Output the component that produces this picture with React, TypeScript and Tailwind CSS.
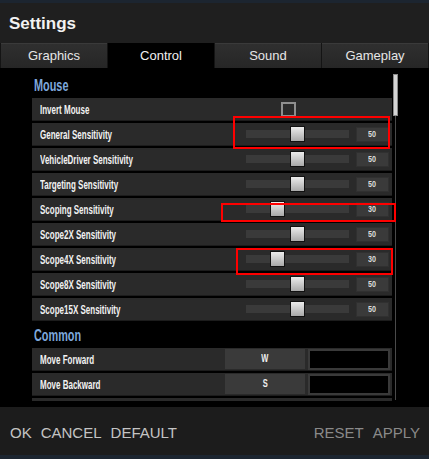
import React from "react";

type Row = { label: string; kind: "check" | "slider"; v?: number };

const mouseRows: Row[] = [
  { label: "Invert Mouse", kind: "check" },
  { label: "General Sensitivity", kind: "slider", v: 50 },
  { label: "VehicleDriver Sensitivity", kind: "slider", v: 50 },
  { label: "Targeting Sensitivity", kind: "slider", v: 50 },
  { label: "Scoping Sensitivity", kind: "slider", v: 30 },
  { label: "Scope2X Sensitivity", kind: "slider", v: 50 },
  { label: "Scope4X Sensitivity", kind: "slider", v: 30 },
  { label: "Scope8X Sensitivity", kind: "slider", v: 50 },
  { label: "Scope15X Sensitivity", kind: "slider", v: 50 },
];

const labelFont = "font-['Liberation_Sans',sans-serif] font-bold";

function SectionHeader({ title }: { title: string }) {
  return (
    <div className="h-[25px] flex items-center pl-[2px]">
      <span className={`${labelFont} inline-block origin-left scale-x-[0.68] text-[16px] text-[#7ea8dc] leading-none`}>
        {title}
      </span>
    </div>
  );
}

function Label({ text }: { text: string }) {
  return (
    <div className="flex-1 min-w-0">
      <span
        className={`${labelFont} inline-block origin-left scale-x-[0.64] whitespace-nowrap text-[12.5px] text-[#f2f2f2] leading-none`}
      >
        {text}
      </span>
    </div>
  );
}

function SettingRow({ row }: { row: Row }) {
  return (
    <div className="h-[23px] mb-[2px] bg-[#2a2a2a] border-b border-[#1c1c1c] flex items-center pl-[8px] pr-[3px]">
      <Label text={row.label} />
      {row.kind === "check" ? (
        <div className="w-[143px] flex items-center">
          <div className="ml-[35px] w-[15px] h-[15px] border-2 border-[#8e8e8e]" />
        </div>
      ) : (
        <>
          <div className="relative w-[103px] h-[8px] bg-[#3a3a3a]">
            <div
              className={`absolute top-[-4px] ${row.v === 30 ? "left-[24px]" : "left-[44px]"} w-[15px] h-[16px] border border-[#111] bg-gradient-to-b from-[#ececec] to-[#a9a9a9]`}
            />
          </div>
          <div className="ml-[7px] w-[33px] h-[15px] bg-[#3a3a3a] border border-[#303030] flex items-center justify-center">
            <span className={`${labelFont} inline-block scale-x-[0.8] text-[9px] text-[#dcdcdc] leading-none`}>
              {row.v}
            </span>
          </div>
        </>
      )}
    </div>
  );
}

function KeyRow({ label, keyName }: { label: string; keyName: string }) {
  return (
    <div className="h-[23px] mb-[2px] bg-[#2a2a2a] border-b border-[#1c1c1c] flex items-center pl-[8px] pr-[2px]">
      <Label text={label} />
      <div className="w-[80px] h-[20px] bg-[#3a3a3a] flex items-center justify-center">
        <span className={`${labelFont} inline-block scale-x-[0.75] text-[10px] text-[#f0f0f0] leading-none`}>
          {keyName}
        </span>
      </div>
      <div className="ml-[3px] w-[82px] h-[21px] bg-black border-2 border-[#3a3a3a]" />
    </div>
  );
}

export default function App() {
  return (
    <div className="relative w-[429px] h-[459px] bg-[#1c2530] pt-[3px] pb-[4px] flex flex-col font-['Liberation_Sans',sans-serif]">
      {/* header */}
      <div className="h-[40px] bg-[#1f1f1f] flex items-center pl-[9px]">
        <span className="text-[17px] font-bold text-[#f2f2f2] leading-none">Settings</span>
      </div>
      {/* tabs */}
      <div className="h-[25px] grid grid-cols-4 gap-[1px] px-[1px] bg-[#141414]">
        {["Graphics", "Control", "Sound", "Gameplay"].map((t) => (
          <div
            key={t}
            className={
              t === "Control"
                ? "bg-black flex items-center justify-center text-[13px] text-[#f0f0f0]"
                : "bg-gradient-to-b from-[#2f2f2f] to-[#262626] border-t border-[#3a3a3a] flex items-center justify-center text-[13px] text-[#e6e6e6]"
            }
          >
            {t}
          </div>
        ))}
      </div>
      {/* content */}
      <div className="h-[339px] bg-black flex">
        <div className="w-[392px] h-[333px] overflow-hidden pl-[32px] pt-[5px]">
          <SectionHeader title="Mouse" />
          {mouseRows.map((r) => (
            <SettingRow key={r.label} row={r} />
          ))}
          <SectionHeader title="Common" />
          <KeyRow label="Move Forward" keyName="W" />
          <KeyRow label="Move Backward" keyName="S" />
          <div className="h-[23px] bg-[#2a2a2a]" />
        </div>
        <div className="ml-[1px] w-[5px] flex flex-col items-center">
          <div className="mt-[6px] w-[5px] h-[42px] bg-[#d4d4d4] border border-[#8a8a8a]" />
          <div className="w-px h-[284px] bg-[#4a4a4a]" />
        </div>
      </div>
      {/* footer */}
      <div className="flex-1 bg-[#1c1c1c] flex items-center justify-between pl-[10px] pr-[9px] pt-[4px] text-[15px] leading-normal">
        <div className="flex gap-[9px] text-[#c4c4c4]">
          <span>OK</span>
          <span>CANCEL</span>
          <span>DEFAULT</span>
        </div>
        <div className="flex gap-[9px] text-[#8a8a8a]">
          <span>RESET</span>
          <span>APPLY</span>
        </div>
      </div>

      {/* red annotation boxes */}
      <div className="absolute left-[233px] top-[116px] w-[157px] h-[33px] border-2 border-[#ff0000]" />
      <div className="absolute left-[221px] top-[203px] w-[175px] h-[19px] border-2 border-[#ff0000]" />
      <div className="absolute left-[236px] top-[248px] w-[157px] h-[27px] border-2 border-[#ff0000]" />
    </div>
  );
}
